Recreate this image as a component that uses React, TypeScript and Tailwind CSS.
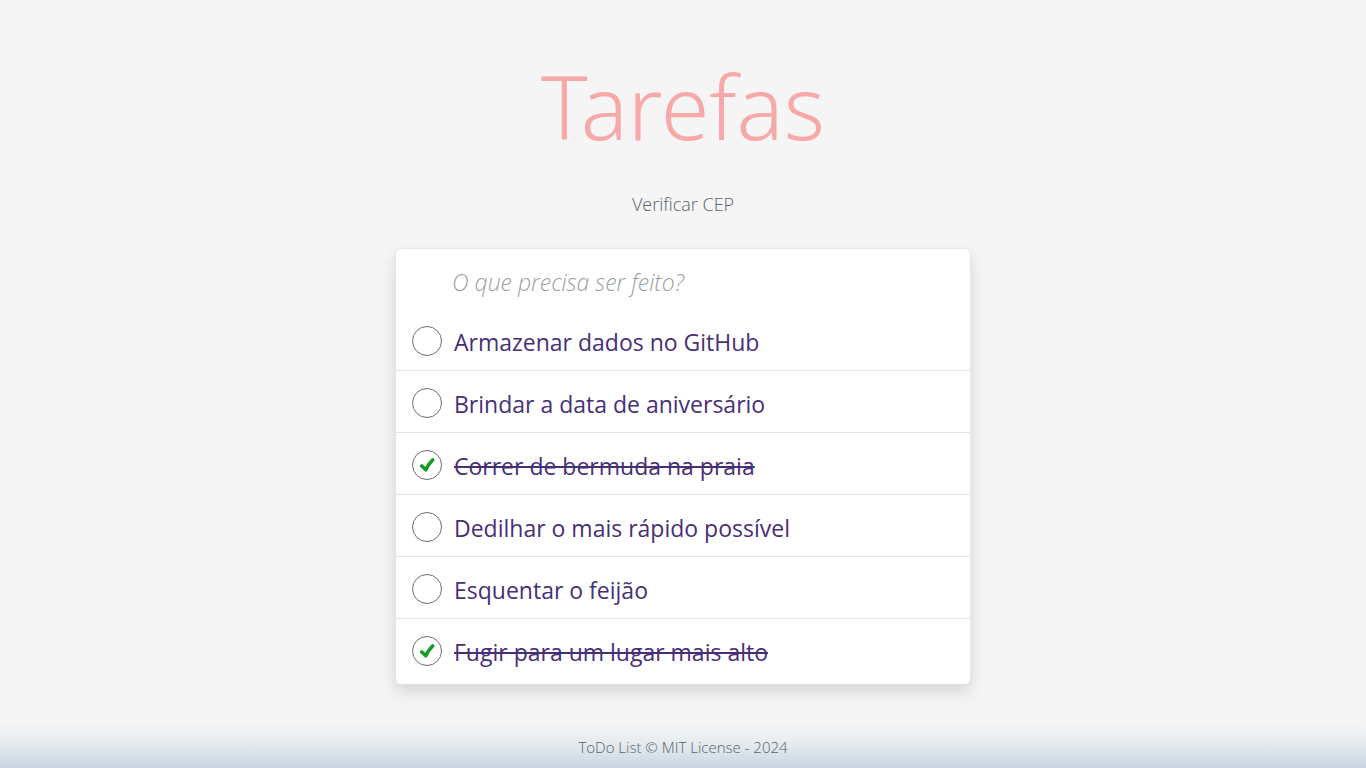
import { useState } from "react";

type Task = { id: number; text: string; done: boolean };

const initialTasks: Task[] = [
  { id: 1, text: "Armazenar dados no GitHub", done: false },
  { id: 2, text: "Brindar a data de aniversário", done: false },
  { id: 3, text: "Correr de bermuda na praia", done: true },
  { id: 4, text: "Dedilhar o mais rápido possível", done: false },
  { id: 5, text: "Esquentar o feijão", done: false },
  { id: 6, text: "Fugir para um lugar mais alto", done: true },
];

function TaskRow({ task, onToggle }: { task: Task; onToggle: () => void }) {
  const id = `task-${task.id}`;
  return (
    <li className="flex h-[62px] items-center gap-3 border-b border-[#e3e3e3] px-4 pt-[2px] last:h-16 last:border-b-0 last:pt-0">
      <span className="grid size-[30px] shrink-0 place-items-center">
        <input
          id={id}
          type="checkbox"
          checked={task.done}
          onChange={onToggle}
          className="col-start-1 row-start-1 size-[30px] cursor-pointer appearance-none rounded-full border border-[#6e6e6e] bg-white"
        />
        {task.done && (
          <svg viewBox="0 0 16 16" className="pointer-events-none z-10 col-start-1 row-start-1 size-4" fill="none" aria-hidden="true">
            <path d="M2.8 9 6.8 12.8C8.3 9.4 10.8 5.8 13.6 3" stroke="#159c22" strokeWidth="3.6" strokeLinecap="round" strokeLinejoin="round" />
          </svg>
        )}
      </span>
      <label
        htmlFor={id}
        className={`cursor-pointer pt-[2px] text-[23px] leading-8 whitespace-nowrap text-[#472f78] ${task.done ? "line-through decoration-2" : ""}`}
      >
        {task.text}
      </label>
    </li>
  );
}

export default function App() {
  const [tasks, setTasks] = useState(initialTasks);
  const [draft, setDraft] = useState("");

  const toggle = (id: number) =>
    setTasks((list) => list.map((t) => (t.id === id ? { ...t, done: !t.done } : t)));

  return (
    <div className="flex min-h-screen flex-col bg-[#f5f5f5] font-['Open_Sans','Noto_Sans',sans-serif]">
      <main className="mx-auto flex w-full max-w-[576px] grow flex-col items-center pt-10">
        <h1 className="font-['Noto_Sans','Open_Sans',sans-serif] text-[88px] leading-[132px] font-light text-[#f7a8a8]">Tarefas</h1>
        <a href="#cep" className="mt-4 text-lg leading-8 font-light text-[#59646c]">
          Verificar CEP
        </a>
        <section className="mt-7 w-full rounded-md border border-[#e6e6e6] border-b-white bg-white shadow-[0_8px_16px_rgba(0,0,0,0.13)]">
          <form
            onSubmit={(e) => {
              e.preventDefault();
              const text = draft.trim();
              if (!text) return;
              setTasks((list) => [...list, { id: Date.now(), text, done: false }]);
              setDraft("");
            }}
          >
            <input
              type="text"
              aria-label="Nova tarefa"
              placeholder="O que precisa ser feito?"
              value={draft}
              onChange={(e) => setDraft(e.target.value)}
              className="block h-[60px] w-full rounded-md bg-transparent pt-[6px] pr-4 pl-14 text-[23px] font-light text-[#432874] outline-none placeholder:text-[#9a9f9f] placeholder:italic"
            />
          </form>
          <ul>
            {tasks.map((task) => (
              <TaskRow key={task.id} task={task} onToggle={() => toggle(task.id)} />
            ))}
          </ul>
        </section>
      </main>
      <footer className="mt-10 flex h-11 items-center justify-center bg-linear-to-b from-[#f5f5f5] via-[#e3eaee] to-[#c9d5e1] pt-[2px] text-[15px] font-light text-[#59646c]">
        ToDo List © MIT License - 2024
      </footer>
    </div>
  );
}
